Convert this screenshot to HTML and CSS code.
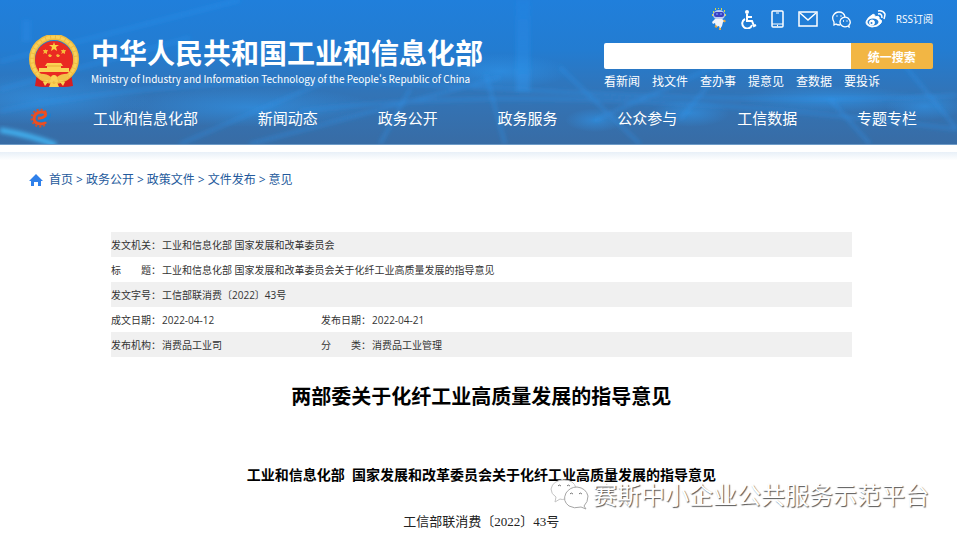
FILE: index.html
```html
<!DOCTYPE html>
<html lang="zh-CN">
<head>
<meta charset="utf-8">
<meta name="viewport" content="width=device-width, initial-scale=1">
<title>两部委关于化纤工业高质量发展的指导意见</title>
<link rel="stylesheet" href="styles.css">
</head>
<body>
<header class="site-header">
  <svg class="backdrop" viewBox="0 0 957 145" preserveAspectRatio="none" aria-hidden="true">
    <defs>
      <radialGradient id="glow"><stop offset="0" stop-color="#2f9cf5" stop-opacity=".5"/><stop offset="1" stop-color="#2f9cf5" stop-opacity="0"/></radialGradient>
      <linearGradient id="beam" x1="0" y1="0" x2="0" y2="1"><stop offset="0" stop-color="#2b8df0" stop-opacity=".2"/><stop offset="1" stop-color="#2f9bf5" stop-opacity=".4"/></linearGradient>
      <filter id="soft" x="-10%" y="-30%" width="120%" height="160%"><feGaussianBlur stdDeviation="2"/></filter>
    </defs>
    <g fill="url(#glow)">
      <ellipse cx="40" cy="100" rx="110" ry="26"/>
      <ellipse cx="250" cy="108" rx="130" ry="20"/>
      <ellipse cx="500" cy="72" rx="70" ry="18"/>
      <ellipse cx="595" cy="121" rx="30" ry="12"/>
      <ellipse cx="690" cy="114" rx="40" ry="14"/>
      <ellipse cx="830" cy="100" rx="90" ry="14"/>
      <ellipse cx="925" cy="107" rx="40" ry="14"/>
    </g>
    <g filter="url(#soft)" fill="none" stroke="#2f98f2" stroke-opacity=".4" stroke-width="3">
      <path d="M0 62L240 0M0 90L190 38M0 112Q200 70 480 88T957 96M180 145L330 80M300 112Q560 80 957 130M250 145L500 78"/>
      <path d="M486 75L505 145M560 68L640 145M595 121L730 60M730 60L680 120M830 100L870 145M900 60L957 130M380 145L410 90"/>
    </g>
    <g filter="url(#soft)" fill="url(#beam)"><path d="M516 0h14v92h-14zM22 20h9v22h-9z"/></g>
    <path filter="url(#soft)" d="M0 131Q30 136 56 146" fill="none" stroke="#42b6f5" stroke-width="5"/>
  </svg>

  <div class="masthead">
    <a class="brand" href="#">
      <svg class="emblem" viewBox="0 0 50 53" aria-hidden="true">
        <path d="M8 38L6 51Q16 53 25 51Q34 53 44 51L42 38z" fill="#d71e20"/>
        <circle cx="25" cy="24" r="22" fill="none" stroke="#efbb40" stroke-width="6"/>
        <circle cx="25" cy="24" r="22" fill="none" stroke="#f8d05a" stroke-width="3" stroke-dasharray="4 1"/>
        <circle cx="25" cy="25" r="19" fill="#ea2a22"/>
        <path d="M25 7l1 3h4l-3 2 1 4-3-2-3 2 1-4-3-2h4z" fill="#fad344"/>
        <path d="M16 14l1 1 2 0-1 2 0 2-2-1-2 1 1-2-1-2h2zM34 14l1 1 2 0-1 2 0 2-2-1-2 1 1-2-1-2h2zM21 19l1 1h1l-1 2-2 0-1-2zM29 19l1 1h1l-1 2-2 0-1-2z" fill="#f7ba3b"/>
        <path d="M18 28h14l2 3h-2v2h8v4H10v-4h8v-2h-2z" fill="#fbd255"/>
        <path d="M18 31h14" stroke="#e9ab34" fill="none"/>
        <path d="M9 39Q17 38 22 42Q25 39 28 42Q33 38 41 39L37 45Q30 46 25 43Q20 46 13 45z" fill="#f3c049"/>
        <path d="M14 47l5 0-3 4zM36 47l-5 0 3 4zM22 47l3 2 3-2 2 5H20z" fill="#fbd255"/>
        <circle cx="25" cy="43" r="3" fill="#fbd255"/>
      </svg>
      <span class="brand-text">
        <span class="brand-cn">中华人民共和国工业和信息化部</span>
        <span class="brand-en">Ministry of Industry and Information Technology of the People's Republic of China</span>
      </span>
    </a>

    <div class="tools">
      <div class="quick">
        <a href="#" aria-label="智能问答"><svg width="16" height="22" viewBox="0 0 16 22">
          <path d="M2 4h1M4 1h1M7 0h1M10 1h1M13 3h1M1 7h1M14 7h1" stroke="#d6d44c" stroke-width="2"/>
          <ellipse cx="8" cy="7" rx="6" ry="5" fill="#b9cdf3"/><rect x="3" y="4" width="10" height="5" rx="2" fill="#3a3fc4"/>
          <path d="M5 6h2M9 6h2" stroke="#7db8ff"/><path d="M4 11L1 14 2 16 4 15 5 19 8 18 9 21 11 18 12 14 14 13 11 11z" fill="#f1f4fb"/>
          <path d="M4 18l2 1M9 20v2M13 12l1 2" stroke="#e8a63a" stroke-width="2"/></svg></a>
        <a href="#" aria-label="无障碍"><svg width="16" height="19" viewBox="0 0 16 19" fill="none" stroke="#fff" stroke-width="2">
          <circle cx="6" cy="2" r="2" fill="#fff" stroke="none"/><path d="M6 4v7h5l2 5 2-1M6 7h5"/><path d="M4 9A5 5 0 1 0 11 15"/></svg></a>
        <a href="#" aria-label="手机版"><svg width="13" height="18" viewBox="0 0 13 18" fill="none" stroke="#fff">
          <rect x="1" y="1" width="11" height="16" rx="1" stroke-width="1.5"/><path d="M1 14h11M5 3h3"/><path d="M6 15.5h1" stroke-width="1.5"/></svg></a>
        <a href="#" aria-label="邮箱"><svg width="20" height="16" viewBox="0 0 20 16" fill="none" stroke="#fff" stroke-width="1.5">
          <rect x="1" y="1" width="18" height="14"/><path d="M2 2l8 7 8-7"/></svg></a>
        <a href="#" aria-label="微信"><svg width="19" height="17" viewBox="0 0 19 17" fill="none" stroke="#fff" stroke-width="1.3">
          <path d="M8 14Q5 14 4 13L2 14 2 11Q0 8 1 5Q3 1 7 1Q12 1 13 6"/><path d="M16 15Q12 17 9 14Q7 11 9 8Q12 5 16 7Q20 11 17 14L17 16z"/>
          <path d="M4.5 5h1M8.5 5h1M11 10h1M14.5 10h1" stroke-width="1.7"/></svg></a>
        <a href="#" aria-label="微博"><svg width="21" height="18" viewBox="0 0 21 18" fill="none" stroke="#fff">
          <path d="M7 5Q10 3 10 7Q15 5 14 9Q18 10 16 13Q13 17 7 17Q1 16 1 12Q2 8 7 5z" fill="#fff"/>
          <ellipse cx="8" cy="12" rx="5.5" ry="3.5" fill="#237fd6" stroke="none"/><circle cx="7" cy="12.5" r="2.5" fill="#fff"/><circle cx="6.5" cy="13" r="1" fill="#237fd6" stroke="none"/>
          <path d="M13 1Q18 0 20 4Q20 6 19 9" stroke-width="1.5"/><path d="M13 4Q17 3 17 8" stroke-width="1.5"/></svg></a>
        <a class="rss" href="#">RSS订阅</a>
      </div>
      <form class="search">
        <input type="text" aria-label="搜索">
        <button type="button">统一搜索</button>
      </form>
      <div class="shortcuts">
        <a href="#">看新闻</a><a href="#">找文件</a><a href="#">查办事</a><a href="#">提意见</a><a href="#">查数据</a><a href="#">要投诉</a>
      </div>
    </div>
  </div>

  <nav class="main-nav">
    <svg class="nav-logo" width="22" height="20" viewBox="0 0 22 20" fill="none" aria-hidden="true">
      <path d="M17 4A8.5 8.5 0 1 0 16 17" stroke="#d0502f" stroke-width="2" stroke-dasharray="2 2"/>
      <path d="M9 10Q13 11 16 8Q18 4 13 4Q5 4 5 11Q6 16 12 16Q15 16 17 14" stroke="#ee4e20" stroke-width="3"/>
      <path d="M9 12Q17 12 22 5Q22 14 12 14z" fill="#157fd4"/>
    </svg>
    <div class="nav-links">
      <a href="#">工业和信息化部</a><a href="#">新闻动态</a><a href="#">政务公开</a><a href="#">政务服务</a><a href="#">公众参与</a><a href="#">工信数据</a><a href="#">专题专栏</a>
    </div>
  </nav>
</header>
<div class="header-rule"></div>

<nav class="crumbs" aria-label="当前位置">
  <svg width="14" height="12" viewBox="0 0 14 12" aria-hidden="true"><path d="M7 0L14 7H12V12H9V8H5V12H2V7H0z" fill="#2f80ea"/></svg>
  <a href="#">首页</a><span>&gt;</span><a href="#">政务公开</a><span>&gt;</span><a href="#">政策文件</a><span>&gt;</span><a href="#">文件发布</a><span>&gt;</span><a href="#">意见</a>
</nav>

<main class="content">
  <table class="meta">
    <colgroup><col class="label-col"><col class="value-col"><col class="label-col"><col></colgroup>
    <tr><th scope="row">发文机关：</th><td colspan="3">工业和信息化部 国家发展和改革委员会</td></tr>
    <tr><th scope="row">标　　题：</th><td colspan="3">工业和信息化部 国家发展和改革委员会关于化纤工业高质量发展的指导意见</td></tr>
    <tr><th scope="row">发文字号：</th><td colspan="3">工信部联消费〔2022〕43号</td></tr>
    <tr><th scope="row">成文日期：</th><td>2022-04-12</td><th scope="row">发布日期：</th><td>2022-04-21</td></tr>
    <tr><th scope="row">发布机构：</th><td>消费品工业司</td><th scope="row">分　　类：</th><td>消费品工业管理</td></tr>
  </table>

  <article>
    <h1>两部委关于化纤工业高质量发展的指导意见</h1>
    <h2>工业和信息化部 &nbsp;国家发展和改革委员会关于化纤工业高质量发展的指导意见</h2>
    <p>工信部联消费〔2022〕43号</p>
  </article>
</main>

<div class="watermark">
  <svg width="39" height="32" viewBox="0 0 39 32" aria-hidden="true" fill="#fff" stroke="#a6a6a6">
    <path d="M15 20Q12 21 10 20L5 23 6 18Q1 15 1 10Q3 1 14 1Q24 1 26 9" stroke="#c4c4c4"/>
    <path d="M34 27L36 30 31 28Q24 30 19 27Q12 22 16 14Q20 8 27 8Q36 9 38 17Q38 23 34 27z"/>
    <path d="M8 7q1-2 3 0M17 7q1-2 3 0M20 15q1-2 3 0M29 15q1-2 3 0" stroke="#777"/>
  </svg>
  <span>赛斯中小企业公共服务示范平台</span>
</div>
</body>
</html>
```
FILE: styles.css
```css
* { box-sizing: border-box; }

body {
  margin: 0;
  background: #fff;
  color: #333;
  font-family: "Open Sans", "Noto Sans CJK SC", sans-serif;
  font-size: 12px;
  line-height: 16px;
}

a { color: inherit; text-decoration: none; }
svg { display: block; flex: none; }

.site-header {
  position: relative;
  padding: 8px 24px 15px 29px;
  background: linear-gradient(#207fdb 0%, #237cd1 35%, #3274b7 65%, #386ca5 100%);
  border-bottom: 1px solid #6f9cc8;
  color: #fff;
}

.backdrop {
  position: absolute;
  inset: 0;
  width: 100%;
  height: 100%;
}

.masthead,
.main-nav {
  position: relative;
  display: flex;
  justify-content: space-between;
}

.brand {
  display: flex;
  align-items: flex-start;
  gap: 12px;
  padding-top: 27px;
}

.emblem { width: 50px; height: 53px; }

.brand-text {
  display: flex;
  flex-direction: column;
  white-space: nowrap;
}

.brand-cn {
  font-size: 28px;
  font-weight: bold;
  line-height: 36px;
}

.brand-en {
  font-family: "Noto Sans CJK SC", sans-serif;
  font-size: 10px;
  line-height: 16px;
}

.tools { width: 329px; }

.quick {
  display: flex;
  align-items: center;
  justify-content: flex-end;
  gap: 14px;
  height: 22px;
}

.rss {
  margin-left: -4px;
  font-size: 10px;
}

.search {
  display: flex;
  height: 26px;
  margin-top: 13px;
  border-radius: 2px;
  overflow: hidden;
}

.search input {
  flex: 1;
  min-width: 0;
  border: 0;
  padding: 0 8px;
  background: #fff;
}

.search button {
  width: 25%;
  border: 0;
  padding: 0;
  background: #f2b644;
  color: #fff;
  font: bold 12px "Noto Sans CJK SC", sans-serif;
}

.shortcuts {
  display: flex;
  gap: 12px;
  margin-top: 5px;
}

.main-nav {
  align-items: center;
  gap: 42px;
  margin-top: 17px;
  padding-right: 16px;
}

.nav-links {
  display: flex;
  flex: 1;
  justify-content: space-between;
  font-size: 15px;
  line-height: 22px;
}

.header-rule {
  height: 14px;
  margin-top: 7px;
  background: linear-gradient(#e8f0f8, #fff 60%);
}

.crumbs {
  display: flex;
  align-items: center;
  gap: 3px;
  padding: 6px 29px;
  color: #245a9c;
}

.crumbs svg { margin-right: 3px; }

.content {
  padding: 38px 11% 8px 111px;
}

.meta {
  width: 100%;
  border-collapse: collapse;
  table-layout: fixed;
  font-size: 10px;
}

.meta tr { height: 25px; }
.meta tr:nth-child(odd) { background: #f0f0f0; }

.meta th,
.meta td {
  padding: 0;
  font-weight: normal;
  text-align: left;
  white-space: nowrap;
}

.label-col { width: 51px; }
.value-col { width: 159px; }

article {
  color: #000;
  text-align: center;
}

h1 {
  margin: 24px 0 0;
  font-size: 20px;
  line-height: 32px;
}

h2 {
  margin: 51px 0 0;
  font-size: 14px;
  line-height: 22px;
}

article p {
  margin: 25px 0 0;
  color: #222;
  font-family: "Liberation Serif", "Noto Sans CJK SC", serif;
  font-size: 13px;
  line-height: 22px;
}

.watermark {
  position: absolute;
  right: 28px;
  bottom: 25px;
  display: flex;
  align-items: center;
  gap: 4px;
  color: #fff;
  font-size: 24px;
  line-height: 32px;
  text-shadow: 1px 1px 1px #555;
}
```
